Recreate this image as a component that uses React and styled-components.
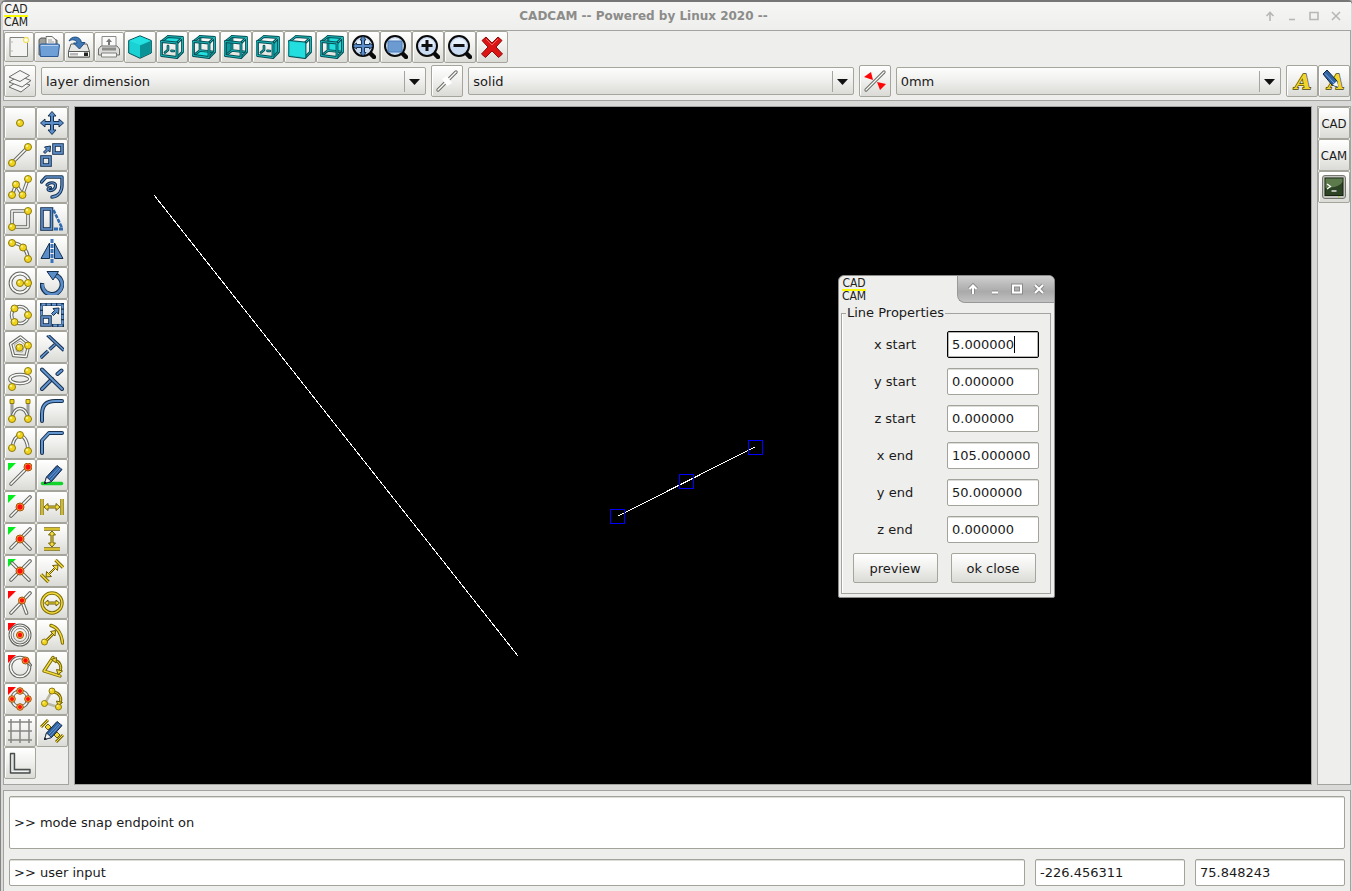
import React, { useState } from 'react'
import styled, { createGlobalStyle } from 'styled-components'

/* ---------- drawing helpers, every tool icon is 24 x 24 ---------- */

const Svg = ({ children, size = 24 }) => (
    <svg width={size} height={size} viewBox="0 0 24 24" fill="none" aria-hidden="true">{children}</svg>
)

// a stroke with a darker outline around it
const Tube = ({ d, edge, fill, w = 3, dash, cap = 'round' }) => (
    <g strokeLinecap={cap} strokeLinejoin="round" strokeDasharray={dash}>
        <path d={d} stroke={edge} strokeWidth={w + 1} />
        <path d={d} stroke={fill} strokeWidth={w - 1} />
    </g>
)
const Rail = ({ d, w = 2.6 }) => <Tube d={d} w={w} edge="#666963" fill="#fbfbfa" />
const Blue = (p) => <Tube edge="#16304f" fill="#6395d0" {...p} />
const Gold = (p) => <Tube w={2.4} edge="#7d6b08" fill="#f2dc3c" {...p} />

const Dot = ({ x, y, r = 3.5 }) => (
    <g>
        <circle cx={x} cy={y} r={r} fill="#f0d41c" stroke="#8d7a10" />
        <circle cx={x - 1} cy={y - 1} r={r / 3} fill="#fbf08a" />
    </g>
)
const Hot = ({ x, y, r = 4 }) => (
    <g>
        <circle cx={x} cy={y} r={r} fill="#ffab3c" stroke="#a5520c" />
        <circle cx={x} cy={y} r={r - 1.3} fill="#ff0d0d" />
    </g>
)
const Corner = ({ color }) => <path d="M0 0H8L0 8Z" fill={color} />
const GREEN = '#00ef1c'
const RED = '#ff0505'

const BlueShape = ({ d }) => <path d={d} fill="#5b8dc9" stroke="#16304f" strokeLinejoin="round" />
const GoldShape = ({ d }) => <path d={d} fill="#f2dc3c" stroke="#6f5e06" strokeLinejoin="round" />
const BlueBox = ({ x, y, w, h }) => (
    <g>
        <rect x={x} y={y} width={w} height={h} stroke="#16304f" strokeWidth="3.6" />
        <rect x={x} y={y} width={w} height={h} stroke="#6395d0" strokeWidth="1.6" />
    </g>
)
const circle = (x, y, r) => `M${x - r} ${y}a${r} ${r} 0 1 0 ${2 * r} 0a${r} ${r} 0 1 0 ${-2 * r} 0`

const Pencil = () => (
    <g>
        <path d="M6.5 14L17 2.5L22 6.5L11.5 18.5L4.5 20.5Z" fill="#2e62a3" stroke="#10233d" strokeLinejoin="round" />
        <path d="M9 15L19 4.500M10.500 17L20.500 5.500" stroke="#7ba7dc" strokeWidth=".8" />
        <path d="M6.500 14L11.500 18.500L4.500 20.500Z" fill="#f4f4f2" stroke="#10233d" strokeWidth=".8" />
        <path d="M4 21L5 18.500L6.700 20Z" fill="#111" />
    </g>
)

/* ---------- left tool box ---------- */

const tools = [
    ['point', <Dot x={12} y={12} />],
    ['move', <BlueShape d="M12 .5L16 5H13.500V10.500H19V8L23.500 12L19 16V13.500H13.500V19H16L12 23.500L8 19H10.500V13.500H5V16L.5 12L5 8V10.500H10.500V5H8Z" />],
    ['line', <><Rail d="M4 20L20 4" /><Dot x={4} y={20} /><Dot x={20} y={4} /></>],
    ['copy', <><BlueBox x={2} y={14} w={8} h={8} /><BlueBox x={14} y={2} w={8} h={8} /><BlueShape d="M3.500 9L6.500 6L4.500 4L10.500 3L10 9L8 7.500L5 10.500Z" /></>],
    ['polyline', <><Rail d="M4 20L8 9.500L14.500 20L20 4" /><Dot x={4} y={20} /><Dot x={8} y={9.5} /><Dot x={14.5} y={20} /><Dot x={20} y={4} /></>],
    ['offset', <><Blue w={2.4} d="M1.500 7L6 2H22V10C22 17 18 21.500 12 22" /><Blue w={2.2} d="M7 10C9 7 15 7 15.500 10C16 13 13 16 9.500 15.500C7 15 8 12.500 10.500 12.500" /></>],
    ['rectangle', <><Rail d="M4 4H20V20H4Z" /><Dot x={20} y={4} /><Dot x={4} y={20} /></>],
    ['taper', <><BlueBox x={2} y={2} w={9.5} h={20} /><path d="M13.500 3L22 21" stroke="#2f68ad" strokeWidth="2.600" strokeDasharray="4 1" /><path d="M14 22H23.500" stroke="#2f68ad" strokeWidth="3" strokeDasharray="4 1" /></>],
    ['arc', <><Rail d="M4 4C13 4 20 11 20 20" /><Dot x={4} y={4} /><Dot x={15} y={8.5} /><Dot x={20} y={20} /></>],
    ['mirror', <><BlueShape d="M9.500 4V19.500H1Z" /><BlueShape d="M14.500 4V19.500H23Z" /><path d="M12 0V24" stroke="#3b74b8" strokeWidth="3" strokeDasharray="4 1" /></>],
    ['circle', <><Rail d={circle(12, 12, 9.5)} w={2.8} /><Dot x={12} y={12} /><Dot x={20} y={12} /></>],
    ['rotate', <><path d="M2 12A10 10 0 1 0 15.500 4" stroke="#16304f" strokeWidth="4.600" /><path d="M2.500 13A9.800 9.800 0 1 0 15 4.200" stroke="#5b8dc9" strokeWidth="2.800" /><BlueShape d="M7 .5H18.500L13 9Z" /></>],
    ['circle by three points', <><Rail d={circle(12, 12, 8.5)} /><Dot x={6.5} y={5.5} /><Dot x={20} y={12} /><Dot x={6.5} y={19} /></>],
    ['scale', <><path d="M1.500 1.500H22.500V22.500H1.500Z" stroke="#16304f" strokeWidth="3" /><path d="M1.500 1.500H22.500V22.500H1.500Z" stroke="#6b9bd6" strokeWidth="2" strokeDasharray="4 1.250" /><path d="M0 12H12V24H0Z" fill="#f4f4f2" /><BlueBox x={2} y={14} w={8} h={8} /><BlueShape d="M11.500 10.500L14.500 7.500L13 5.500L19 5L18.500 11L16.500 9.500L13.500 12.500Z" /></>],
    ['polygon', <><Rail w={2.4} d="M12.500 2L21 9L18 21.500L5.500 20.500L2.500 9Z" /><path d="M12 6L16.500 9.500L14.500 17L8.500 16.500L6.500 9.500Z" stroke="#a3a5a0" /><Dot x={11.5} y={12.5} /><Dot x={20} y={10.5} /></>],
    ['trim', <><Blue w={2.6} cap="butt" d="M7.500 0L24 15.500" /><Blue w={2.6} cap="butt" d="M15 9.500L9.500 14.500" /><Blue w={2.6} cap="butt" d="M8 16L.5 23" /></>],
    ['ellipse', <><Rail w={2.6} d="M2 12a10 4.500 0 1 0 20 0a10 4.500 0 1 0-20 0" /><Dot x={20} y={4} /><Dot x={4} y={20} /></>],
    ['break', <><Blue w={3} d="M2 22L12 12" /><Blue w={3} d="M2 2.500L22 22" /><Blue w={3} d="M17.500 7L21.500 3.500" /></>],
    ['spline', <><path d="M4 4V18M20 4V18" stroke="#5d605a" strokeWidth="2.600" /><path d="M4 4V18M20 4V18" stroke="#fff" strokeWidth=".8" /><Rail w={2.4} d="M4 20C5 6 19 6 20 20" /><path d="M2 .5H6V4.500H2ZM18 .5H22V4.500H18Z" fill="#f0d41c" stroke="#8d7a10" /><Dot x={4} y={20} /><Dot x={20} y={20} /></>],
    ['fillet', <Blue w={3} d="M2 22V15C2 6 7 2 15 2H22" />],
    ['arc by points', <><Rail d="M4 17C5 10 8 5 12 4.500C17 5 20 12 20 19" /><Dot x={4} y={17} /><Dot x={12} y={4} /><Dot x={20} y={20} /></>],
    ['chamfer', <Blue w={3} d="M2 22V9.500L9 2H22" />],
    ['snap endpoint', <><Corner color={GREEN} /><Rail d="M20 4L3 21" /><Hot x={20} y={4} /></>],
    ['draw', <><path d="M2.500 20.500H21.500" stroke="#12d22c" strokeWidth="3.500" strokeLinecap="round" /><Pencil /></>],
    ['snap midpoint', <><Corner color={GREEN} /><Rail d="M22 2L3 21" /><Hot x={12} y={12} /></>],
    ['dimension horizontal', <><Gold cap="butt" d="M2 4V20M22 4V20" /><GoldShape d="M4 12L8 8.500V11H16V8.500L20 12L16 15.500V13H8V15.500Z" /></>],
    ['snap perpendicular', <><Corner color={GREEN} /><Rail d="M22 2L3 21M12 12L22 22" /><Hot x={12} y={12} /></>],
    ['dimension vertical', <><Gold cap="butt" d="M4 2H20M4 22H20" /><GoldShape d="M12 4L8.500 8H11V16H8.500L12 20L15.500 16H13V8H15.500Z" /></>],
    ['snap intersection', <><Corner color={GREEN} /><Rail d="M22 2L3 21M4 4L21 21" /><Hot x={12} y={12} /></>],
    ['dimension aligned', <><Gold cap="butt" d="M15.500 1L23 8.500M1 15.500L8.500 23" /><GoldShape d="M6 18L6.500 12.500L8.500 14.500L14.500 8.500L12.500 6.500L18 6L17.500 11.500L15.500 9.500L9.500 15.500L11.500 17.500Z" /></>],
    ['snap vertex', <><Corner color={RED} /><Rail d="M14 10L18.500 22" /><Rail d="M22 2L3 22" /><Hot x={14} y={9.5} r={3.5} /></>],
    ['dimension diameter', <><Gold d={circle(12, 12, 10)} /><GoldShape d="M4.500 12L8 9V11H16V9L19.500 12L16 15V13H8V15Z" /></>],
    ['snap center', <><Corner color={RED} /><Rail w={2} d={circle(12, 12, 10)} /><path d={circle(12, 12, 6.5)} stroke="#85878200" /><path d={circle(12, 12, 6.5)} stroke="#858782" /><Hot x={12} y={12} r={3.5} /></>],
    ['dimension radius', <><Gold d="M11 2.500C17 4 22 11 22.500 20" /><Gold w={2} d="M5 19L13 11" /><GoldShape d="M15.500 7.500L15 13L10.500 8.500Z" /><Dot x={4.5} y={19} r={3} /></>],
    ['snap tangent', <><Corner color={RED} /><Rail d={circle(12, 12, 9.5)} /><Rail w={2} d="M17 5L22.500 10" /><Hot x={17.5} y={5.5} r={3.5} /></>],
    ['dimension angle', <><Gold d="M13 2.500L4 16L20 21" /><Gold w={2} d="M14 5C20 6 22.500 12 19.500 17" /><GoldShape d="M11.500 4.500L16.500 2.500L16 8Z" /><GoldShape d="M16.500 14.500L22.500 16L18 19.500Z" /></>],
    ['snap quadrant', <><Corner color={RED} /><Rail d={circle(12, 12, 8)} /><Hot x={12} y={4} r={3.3} /><Hot x={4} y={12} r={3.3} /><Hot x={20} y={12} r={3.3} /><Hot x={12} y={20} r={3.3} /></>],
    ['dimension angle by points', <><path d="M12 4L5 16L18 20" stroke="#b9b6a2" strokeWidth="2.500" /><Gold w={2} d="M14 5C20 6 22.500 12 19.500 17" /><GoldShape d="M16.500 14L22.500 15.500L18 18.500Z" /><Dot x={12} y={4} r={3} /><Dot x={4.5} y={16.5} r={3} /><Dot x={18.5} y={20} r={3} /></>],
    ['grid', <path d="M3 0V24M12 0V24M21 0V24M0 3H24M0 12H24M0 21H24" stroke="#858583" strokeWidth="1.500" />],
    ['edit dimension', <><Gold w={2} cap="butt" d="M1 8L8 1M16 23L23 16" /><GoldShape d="M8 5L11 8L8 11L5 8ZM17 13L20 16L17 19L14 16Z" /><Pencil /></>],
    ['ruler', <><path d="M2.500 2.500H6.500V18.500H22V22H2.500Z" fill="#cdd2cf" stroke="#4a4e4c" strokeWidth="1.400" strokeLinejoin="round" /><path d="M4 4V20.500H20" stroke="#f2f4f3" /></>],
]

/* ---------- top tool bar ---------- */

const faces = {
    top: 'M1.500 6.500L8 1.500L22.500 2.500L17 8Z',
    bottom: 'M1.500 20.500L8 15.500L22 17L17 22.500Z',
    left: 'M1.500 6.500L8 1.500V15.500L1.500 20.500Z',
    right: 'M17 8L22.500 2.500V17L17 22.500Z',
    front: 'M1.500 6.500L17 8V22.500L1.500 20.500Z',
    back: 'M8 1.500L22.500 2.500V17L8 15.500Z',
}
const faceFill = { left: '#0b9a9d', right: '#14b9bb' }

const Cube = ({ face }) => {
    // top and right views show only stubs of the hidden edges
    const stubs = face === 'top' || face === 'right'
    const inner = stubs ? 'M8 11V15L5 17.500M11.500 15.800L14 16' : 'M8 1.500V15.500L1.500 20.500M8 15.500L22 17'
    const fill = <path d={faces[face]} fill={faceFill[face] || '#22dede'} />
    return (
        <Svg>
            {face !== 'front' && fill}
            {face !== 'front' && <Tube d={inner} w={1.7} edge="#064f55" fill="#1fd3d3" />}
            <Tube d="M22.500 2.500V17L17 22.500M8 1.500L22.500 2.500L17 8M1.500 6.500L8 1.500" w={1.8} edge="#064f55" fill="#1fd3d3" />
            <Tube d="M1.500 6.500L17 8V22.500L1.500 20.500Z" w={1.8} edge="#064f55" fill="#1fd3d3" />
            {face === 'front' && fill}
        </Svg>
    )
}

const Lens = ({ children }) => (
    <Svg>
        <path d="M17 17L22 22" stroke="#0a0a0a" strokeWidth="4.500" strokeLinecap="round" />
        <circle cx="11" cy="11" r="10" fill="#c9dcf2" stroke="#0a0a0a" strokeWidth="2" />
        <path d="M3.500 11A7.500 7.500 0 0 1 18.500 11Z" fill="#eaf2fb" />
        {children}
    </Svg>
)

const fileButtons = [
    ['new', <Svg>
        <path d="M3 2.500H20.500V21.500H3Z" fill="#f4f4f3" stroke="#7f817c" />
        <path d="M5 6V8M5 15V17" stroke="#b9b9b6" />
        <circle cx="19" cy="5" r="2.500" fill="#fffef4" stroke="#f2e264" strokeWidth="1.300" />
    </Svg>],
    ['open', <Svg>
        <path d="M2 20V4.500L4 3H8L10 5H20V20Z" fill="#9d9f9b" stroke="#5a5c59" />
        <path d="M9 1.500H15L19 5V14H9Z" fill="#f6f6f5" stroke="#6b6d69" />
        <path d="M11 5H15M11 7H17" stroke="#9c9e9a" />
        <path d="M2.500 10L4 9H21.500L22.500 10L21 21.500H3.500Z" fill="#6e9fd6" stroke="#2b5a94" />
        <path d="M4 10.500H21" stroke="#b6d0ee" />
    </Svg>],
    ['save', <Svg>
        <path d="M4 9H20L22.500 16.500V22H1.500V16.500Z" fill="#e6e6e4" stroke="#5a5c59" />
        <path d="M1.500 16.500H22.500V22H1.500Z" fill="#fafafa" stroke="#5a5c59" />
        <path d="M4 18V20.500M6 18V20.500M8 18V20.500M10 18V20.500" stroke="#777" />
        <path d="M17 17.500H21V21H17Z" fill="#222" />
        <path d="M2 6C4 1 13 0 14.500 7.500H18L12.500 14L6.500 8H10C9.500 4.500 5 4 2 6Z" fill="#3f78b4" stroke="#1f4f84" />
    </Svg>],
    ['print', <Svg>
        <path d="M5 13V1.500H19V13Z" fill="#fafafa" stroke="#8a8c88" />
        <path d="M12 3.500L15 7H13V10H11V7H9Z" fill="#777" />
        <path d="M4 11H20L22.500 14V20H1.500V14Z" fill="#dcdcda" stroke="#6d6f6b" />
        <path d="M5 12.500H19V15.500H5Z" fill="#8a8c88" />
        <path d="M4.500 18H19.500V22H4.500Z" fill="#f5f5f4" stroke="#7f817c" />
    </Svg>],
]

const viewButtons = [
    ['view 3d', <Svg>
        <path d="M12 .8L23.300 5.500V18L12 23.300L.7 18V5.500Z" fill="#1ad2d3" stroke="#064f55" strokeLinejoin="round" />
        <path d="M12 1.500L22.500 5.800L12 10L1.500 5.800Z" fill="#24e2e2" />
        <path d="M12 10.500L22.800 6V17.700L12 22.700Z" fill="#0a9396" />
    </Svg>],
    ['view top', <Cube face="top" />],
    ['view bottom', <Cube face="bottom" />],
    ['view left', <Cube face="left" />],
    ['view right', <Cube face="right" />],
    ['view front', <Cube face="front" />],
    ['view back', <Cube face="back" />],
    ['zoom all', <Lens><path d="M11 1L14 5H12.500V9.500H17.500V8L21 11L17.500 14V12.500H12.500V17.500H14L11 21L8 17.500H9.500V12.500H4.500V14L1 11L4.500 8V9.500H9.500V5H8Z" fill="#5b8dc9" stroke="#16304f" /></Lens>],
    ['zoom window', <Lens><path d="M4 6H18V17H4Z" fill="#6c9bd2" stroke="#4d7db8" /></Lens>],
    ['zoom in', <Lens><path d="M11 5V16M5.500 10.500H16.500" stroke="#111" strokeWidth="3" /></Lens>],
    ['zoom out', <Lens><path d="M5.500 10.500H16.500" stroke="#111" strokeWidth="3" /></Lens>],
    ['delete', <Svg>
        <path d="M6 2L12 8L18 2L22 5.500L16 12L22.500 19L18.500 22.500L12 16L5.500 22.500L1.500 19L8 12L2 5.500Z" fill="#dc1414" stroke="#8d0b0b" strokeLinejoin="round" />
        <path d="M6 4L12 10L18 4" stroke="#f26a6a" />
    </Svg>],
]

const layersIcon = (
    <Svg>
        <g fill="#f6f6f5" stroke="#6a6c68" strokeLinejoin="round">
            <path d="M10 12L22 16L13 23L1 18Z" />
            <path d="M11 7L23 11.500L14 18L1 13Z" />
            <path d="M12 1.500L21.500 6.500L12 12.500L1 8Z" />
        </g>
    </Svg>
)
const lineStyleIcon = (
    <Svg>
        <Rail w={2.4} d="M3 21L21 3" />
        <path d="M7 10L12 7L17 14L12 17Z" fill="#fff" />
    </Svg>
)
const thicknessIcon = (
    <Svg>
        <Rail w={2.2} d="M3 21L21 3" />
        <path d="M1 8L8 3L10 11ZM14 13L23 15L17 21Z" fill={RED} />
    </Svg>
)
const LetterA = ({ x }) => (
    <text x={x} y="20" fontFamily="'DejaVu Serif', serif" fontSize="21" fontWeight="bold" fontStyle="italic"
        fill="#f0d62c" stroke="#4b4206" strokeWidth="1.400" paintOrder="stroke">A</text>
)
const textIcon = <Svg><LetterA x="5" /></Svg>
const textEditIcon = (
    <Svg>
        <LetterA x="6" />
        <path d="M1 5L5 1L15 12L16 18L10 16Z" fill="#2e62a3" stroke="#10233d" strokeLinejoin="round" />
        <path d="M3 4.500L12 14" stroke="#7ba7dc" />
        <path d="M15 12L16.500 18L10.500 16Z" fill="#f4f4f2" />
    </Svg>
)
const terminalIcon = (
    <Svg>
        <rect x=".5" y=".5" width="23" height="23" rx="2.500" fill="#c3c4c0" stroke="#74766f" />
        <rect x="3" y="3" width="18" height="17.500" fill="#2c4424" stroke="#17210f" />
        <path d="M3.500 3.500H20.500V7C16 13 9 12 3.500 13Z" fill="#5d7a4c" />
        <path d="M5 9L8.500 11.500L5 14" stroke="#fff" strokeWidth="1.300" />
        <path d="M9.500 16H14.500" stroke="#fff" strokeWidth="1.300" />
        <path d="M16 22H17.500" stroke="#7be21c" />
    </Svg>
)

const winIcons = {
    shade: <path d="M6 11V3M2.500 6L6 2.500L9.500 6" />,
    minimize: <path d="M3 9.500H9" />,
    maximize: <path d="M2 2.500H10V9.500H2Z" />,
    close: <path d="M2 2L10 10M10 2L2 10" />,
}

const fields = [
    ['x start', '5.000000'],
    ['y start', '0.000000'],
    ['z start', '0.000000'],
    ['x end', '105.000000'],
    ['y end', '50.000000'],
    ['z end', '0.000000'],
]

const Logo = () => (
    <LogoBox>
        <span>CAD</span>
        <span>CAM</span>
    </LogoBox>
)

const WindowButtons = ({ raised }) => (
    <WinControls $raised={raised}>
        {Object.keys(winIcons).map((k) => (
            <WinButton key={k} type="button" aria-label={k}>
                <svg width="12" height="12" viewBox="0 0 12 12" fill="none" strokeWidth={raised ? 2 : 1.6} overflow="visible">
                    {raised && <g stroke="#8a8a8a" strokeWidth="4">{winIcons[k]}</g>}
                    <g stroke={raised ? '#fff' : '#b7b7b5'}>{winIcons[k]}</g>
                </svg>
            </WinButton>
        ))}
    </WinControls>
)

const Combo = ({ label, value }) => (
    <ComboBox>
        <select aria-label={label} defaultValue={value}>
            <option>{value}</option>
        </select>
        <svg width="22" height="21" viewBox="0 0 22 21" aria-hidden="true">
            <path d="M.5 0V21" stroke="#a5a59f" />
            <path d="M5 8H16L10.500 14Z" fill="#111" />
        </svg>
    </ComboBox>
)

const Handle = ({ x, y }) => <rect x={x} y={y} width="14" height="14" stroke="#0000ff" fill="none" />

const LineDialog = () => {
    const [active, setActive] = useState('x start')

    return (
        <Dialog role="dialog" aria-label="Line Properties">
            <DialogTitle>
                <Logo />
                <WindowButtons raised />
            </DialogTitle>
            <Group>
                <legend>Line Properties</legend>
                <Form>
                    {fields.map(([name, value]) => {
                        const id = name.replace(' ', '-')
                        return (
                            <React.Fragment key={name}>
                                <label htmlFor={id}>{name}</label>
                                <FieldBox>
                                    <Field id={id} defaultValue={value} $active={active === name} onFocus={() => setActive(name)} />
                                    {active === name && <Caret />}
                                </FieldBox>
                            </React.Fragment>
                        )
                    })}
                    <PushButton type="button">preview</PushButton>
                    <PushButton type="button">ok close</PushButton>
                </Form>
            </Group>
        </Dialog>
    )
}

export default function App() {
    return (
        <Window>
            <GlobalStyle />
            <TitleBar>
                <Logo />
                <h1>CADCAM -- Powered by Linux 2020 --</h1>
                <WindowButtons />
            </TitleBar>

            <TopPanel>
                <Bar>
                    {fileButtons.map(([name, icon]) => <ToolButton key={name} type="button" aria-label={name} $size={30}>{icon}</ToolButton>)}
                    {viewButtons.map(([name, icon]) => <ToolButton key={name} type="button" aria-label={name}>{icon}</ToolButton>)}
                </Bar>
                <Bar $gap={5}>
                    <ToolButton type="button" aria-label="layers">{layersIcon}</ToolButton>
                    <Combo label="layer" value="layer dimension" />
                    <ToolButton type="button" aria-label="line style">{lineStyleIcon}</ToolButton>
                    <Combo label="line style" value="solid" />
                    <ToolButton type="button" aria-label="line thickness">{thicknessIcon}</ToolButton>
                    <Combo label="line thickness" value="0mm" />
                    <Bar>
                        <ToolButton type="button" aria-label="text">{textIcon}</ToolButton>
                        <ToolButton type="button" aria-label="edit text">{textEditIcon}</ToolButton>
                    </Bar>
                </Bar>
            </TopPanel>

            <Workspace>
                <ToolBox $columns={2}>
                    {tools.map(([name, icon]) => (
                        <ToolButton key={name} type="button" aria-label={name}><Svg>{icon}</Svg></ToolButton>
                    ))}
                </ToolBox>

                <Drawing>
                    <svg width="100%" height="100%" shapeRendering="crispEdges">
                        <path d="M79 88L443 549M543 409L680 340" stroke="#fff" />
                        <Handle x={535.5} y={402.5} />
                        <Handle x={604.5} y={367.5} />
                        <Handle x={673.5} y={333.5} />
                    </svg>
                    <LineDialog />
                </Drawing>

                <ToolBox $columns={1}>
                    <ToolButton type="button">CAD</ToolButton>
                    <ToolButton type="button">CAM</ToolButton>
                    <ToolButton type="button" aria-label="terminal">{terminalIcon}</ToolButton>
                </ToolBox>
            </Workspace>

            <Console>
                <LogLine aria-label="messages" readOnly value=">> mode snap endpoint on" />
                <Status>
                    <Field aria-label="command" defaultValue=">> user input" />
                    <Field aria-label="x position" readOnly value="-226.456311" />
                    <Field aria-label="y position" readOnly value="75.848243" />
                </Status>
            </Console>
        </Window>
    )
}

const GlobalStyle = createGlobalStyle`
    * {
        box-sizing: border-box;
    }
    body {
        margin: 0;
        background: #b4b4b4;
    }
    body, button, input, select {
        font-family: 'DejaVu Sans', sans-serif;
        font-size: 13px;
        color: #1a1a1a;
    }
`

const Window = styled.div`
    display: flex;
    flex-direction: column;
    min-height: 100vh;
    padding: 0 1px 0 2px;
    border-top: 2px solid #777;
    border-left: 1px solid #858585;
    border-radius: 6px 4px 0 0;
    background: #d9d9d8;
`

const TitleBar = styled.header`
    display: flex;
    align-items: center;
    height: 28px;
    padding: 0 4px 0 1px;
    background: linear-gradient(#f6f6f5, #eeeeec);

    h1 {
        flex: 1;
        margin: 0;
        text-align: center;
        font-size: 12px;
        font-weight: bold;
        color: #8c8c8a;
    }
`

const LogoBox = styled.div`
    display: flex;
    flex-direction: column;
    align-items: center;
    width: 24px;
    font-family: 'Liberation Sans Narrow', 'DejaVu Sans Condensed', sans-serif;
    font-size: 12px;
    line-height: 11px;
    color: #222;

    span:first-child {
        border-bottom: 2px solid #fbfb00;
    }
`

const WinControls = styled.div`
    display: flex;
    align-items: center;
    padding: ${(p) => (p.$raised ? '0 4px' : '0')};
    align-self: stretch;
    ${(p) => p.$raised && `
        margin-left: auto;
        border-left: 1px solid #999;
        border-bottom: 1px solid #999;
        border-bottom-left-radius: 8px;
        background: linear-gradient(#cfcfcf, #aaa 60%, #c2c2c2);
    `}
`

const WinButton = styled.button`
    display: flex;
    align-items: center;
    justify-content: center;
    width: 22px;
    height: 22px;
    padding: 0;
    border: 0;
    background: none;
`

const panel = `
    border: 1px solid #a3a39f;
    background: #eeeeec;
`

const TopPanel = styled.div`
    display: flex;
    flex-direction: column;
    gap: 2px;
    padding-bottom: 3px;
    ${panel}
`

const Bar = styled.div`
    display: flex;
    align-items: center;
    gap: ${(p) => p.$gap || 0}px;
`

const ToolButton = styled.button`
    display: flex;
    align-items: center;
    justify-content: center;
    flex: none;
    width: ${(p) => p.$size || 32}px;
    height: ${(p) => p.$size || 32}px;
    padding: 0;
    border: 1px solid #a5a59b;
    border-radius: 2px;
    background: linear-gradient(#fff, #f1f1ef 45%, #dadad6);
    box-shadow: inset 1px 1px 0 #fff;
    font-family: 'Liberation Sans Narrow', 'DejaVu Sans Condensed', sans-serif;

    &:active {
        background: #d6d6d2;
    }
`

const ComboBox = styled.div`
    display: grid;
    flex: 1;
    align-items: center;

    select, svg {
        grid-area: 1 / 1;
    }
    select {
        width: 100%;
        height: 28px;
        padding: 0 24px 0 4px;
        appearance: none;
        border: 1px solid #a5a59b;
        border-radius: 2px;
        background: linear-gradient(#fdfdfd, #efefed 50%, #dbdbd7);
    }
    svg {
        justify-self: end;
        pointer-events: none;
    }
`

const Workspace = styled.main`
    display: flex;
    flex: 1;
    gap: 5px;
    margin: 5px 0;
`

const ToolBox = styled.div`
    display: grid;
    grid-template-columns: repeat(${(p) => p.$columns}, 32px);
    align-content: start;
    padding-bottom: 4px;
    ${panel}
`

const Drawing = styled.div`
    position: relative;
    flex: 1;
    border: 1px solid #a3a39f;
    background: #000;

    > svg {
        position: absolute;
        inset: 0;
    }
`

const Console = styled.footer`
    display: flex;
    flex-direction: column;
    gap: 10px;
    padding: 5px;
    ${panel}
    border-bottom: 0;
`

const Field = styled.input`
    width: 100%;
    height: 27px;
    padding: 0 4px;
    border: 1px solid ${(p) => (p.$active ? '#000' : '#a3a39b')};
    border-radius: 2px;
    background: #fff;
    box-shadow: ${(p) => (p.$active ? 'inset 0 0 0 1px #b5b5ae' : 'inset 0 1px 0 #dcdcd8')};
    outline: none;
`

const LogLine = styled(Field)`
    height: 53px;
`

const Status = styled.div`
    display: grid;
    grid-template-columns: 1fr 150px 150px;
    gap: 10px;
`

const Dialog = styled.section`
    position: absolute;
    left: 763px;
    top: 168px;
    width: 217px;
    padding-bottom: 3px;
    border: 1px solid #8b8b89;
    border-radius: 6px 6px 2px 2px;
    background: #eeeeec;
    overflow: hidden;
`

const DialogTitle = styled.div`
    display: flex;
    align-items: center;
    height: 27px;
    padding-left: 3px;
`

const Group = styled.fieldset`
    margin: 0 3px 0 2px;
    padding: 8px 8px 10px 4px;
    border: 1px solid #a3a39f;
    box-shadow: inset 1px 0 0 #fff;

    legend {
        padding: 0 1px;
        line-height: 20px;
    }
`

const Form = styled.form`
    display: grid;
    grid-template-columns: 1fr 1fr;
    gap: 10px 0;
    align-items: center;
    justify-items: center;
`

const FieldBox = styled.div`
    position: relative;
    width: 92px;
    height: 27px;
`

const Caret = styled.span`
    position: absolute;
    left: 67px;
    top: 5px;
    width: 1px;
    height: 17px;
    background: #000;
`

const PushButton = styled.button`
    width: 85px;
    height: 30px;
    padding: 0;
    border: 1px solid #a5a59b;
    border-radius: 2px;
    background: linear-gradient(#fff, #f1f1ef 45%, #dadad6);
`
